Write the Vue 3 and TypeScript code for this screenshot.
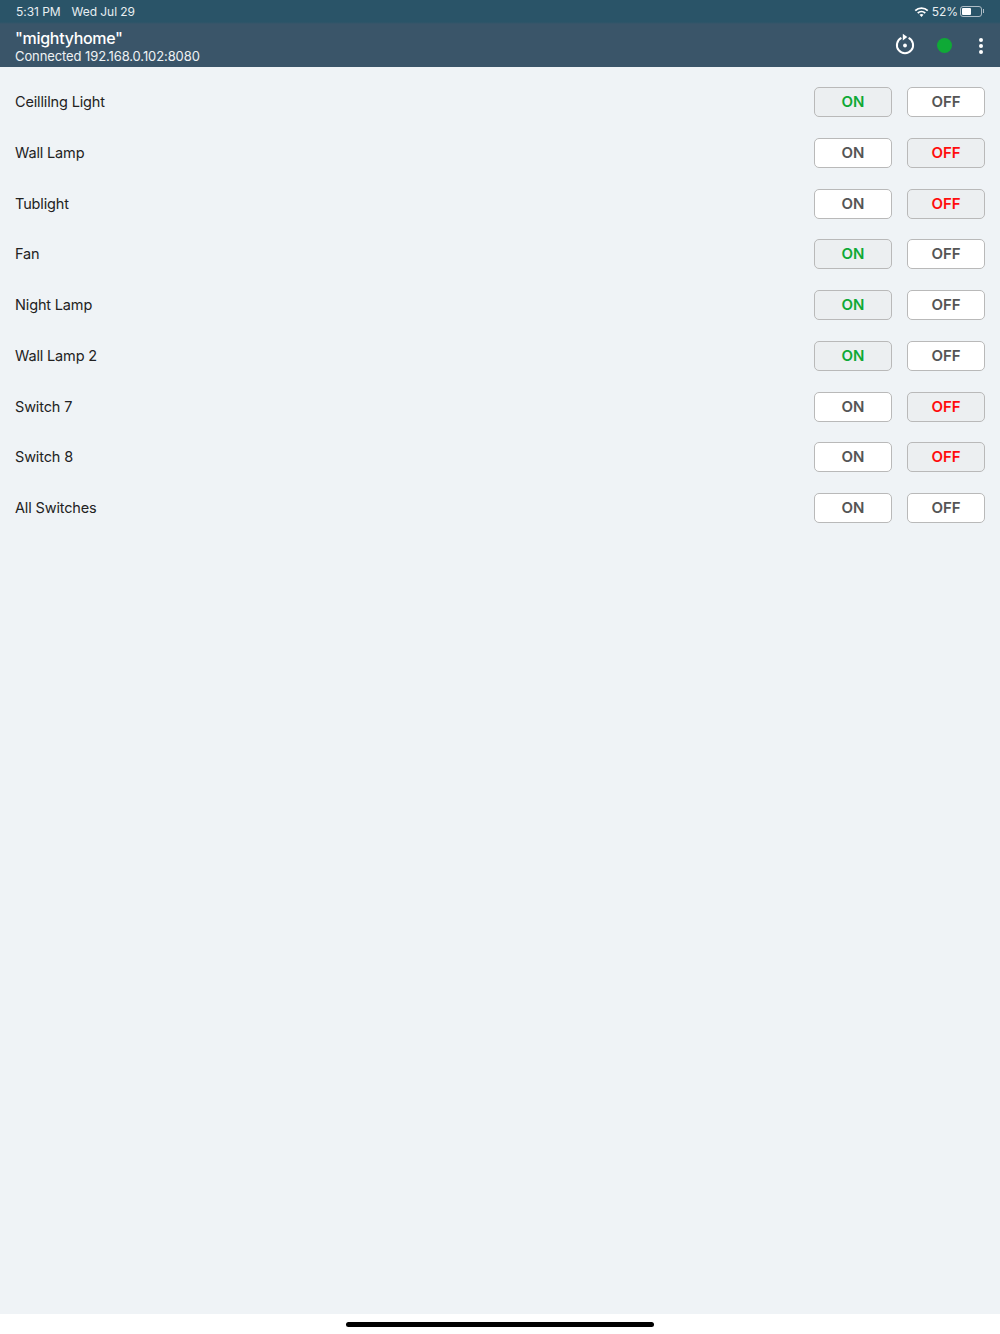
<template>
  <div class="page">
    <header class="head">
      <div class="status">
        <div class="clock"><span>5:31 PM</span><span>Wed Jul 29</span></div>
        <div class="sys">
          <svg class="wifi" width="15" height="11" viewBox="0 0 15 11">
            <path d="M0.6 3.9A10 10 0 0 1 14.4 3.9L13.1 5.3A8.1 8.1 0 0 0 1.9 5.3Z" fill="#fff" />
            <path d="M3.1 6.4A6.4 6.4 0 0 1 11.9 6.4L10.6 7.7A4.6 4.6 0 0 0 4.4 7.7Z" fill="#fff" />
            <path d="M5.5 8.8A3 3 0 0 1 9.5 8.8L7.5 10.9Z" fill="#fff" />
          </svg>
          <span class="pct">52%</span>
          <div class="battery"><div class="level" :style="{ width: '52%' }"></div></div>
          <div class="nub"></div>
        </div>
      </div>
      <div class="bar">
        <div class="titles">
          <div class="name">"mightyhome"</div>
          <div class="addr">Connected 192.168.0.102:8080</div>
        </div>
        <div class="actions">
          <svg class="reload" width="20" height="22" viewBox="0 0 20 22" fill="none">
            <path d="M6.4 4.9A8.1 8.1 0 1 0 13.6 4.9" stroke="#fff" stroke-width="2" />
            <path d="M7.8 0.8L12.3 4.1L7.8 7.6Z" fill="#fff" />
            <circle cx="10" cy="12.5" r="1.9" fill="#fff" />
          </svg>
          <div class="dot"></div>
          <div class="menu"><i></i><i></i><i></i></div>
        </div>
      </div>
    </header>

    <main class="list">
      <div v-for="sw in switches" :key="sw.name" class="row">
        <span class="label">{{ sw.name }}</span>
        <div class="btns">
          <button class="btn" :class="{ active: sw.state === 'on', on: sw.state === 'on' }">ON</button>
          <button class="btn" :class="{ active: sw.state === 'off', off: sw.state === 'off' }">OFF</button>
        </div>
      </div>
    </main>

    <footer class="foot"><div class="home"></div></footer>
  </div>
</template>

<script setup lang="ts">
type SwitchState = 'on' | 'off' | 'none'

const switches: { name: string; state: SwitchState }[] = [
  { name: 'Ceillilng Light', state: 'on' },
  { name: 'Wall Lamp', state: 'off' },
  { name: 'Tublight', state: 'off' },
  { name: 'Fan', state: 'on' },
  { name: 'Night Lamp', state: 'on' },
  { name: 'Wall Lamp 2', state: 'on' },
  { name: 'Switch 7', state: 'off' },
  { name: 'Switch 8', state: 'off' },
  { name: 'All Switches', state: 'none' },
]
</script>

<style>
body {
  background: #fff;
}
</style>

<style scoped>
.page {
  width: 1000px;
  height: 1334px;
  display: flex;
  flex-direction: column;
  font-family: Inter, "Liberation Sans", sans-serif;
  overflow: hidden;
}

.head {
  height: 67px;
  flex: none;
  box-sizing: border-box;
  background: linear-gradient(#2a5468 0, #2a5468 22px, #3a5569 24px, #3a5569 100%);
  color: #fff;
}

.status {
  height: 22px;
  display: flex;
  justify-content: space-between;
  align-items: center;
  padding: 0 16px;
  font-size: 12px;
  letter-spacing: -0.05px;
  color: #e8eef1;
}

.clock {
  display: flex;
  gap: 11px;
}

.sys {
  display: flex;
  align-items: center;
}

.wifi {
  margin-right: 3px;
}

.pct {
  margin-right: 2px;
}

.battery {
  width: 22px;
  height: 11px;
  box-sizing: border-box;
  border: 1px solid #aebcc5;
  border-radius: 3px;
  padding: 1px;
}

.level {
  height: 100%;
  background: #fff;
  border-radius: 1px;
}

.nub {
  width: 1px;
  height: 4px;
  background: #aebcc5;
  margin-left: 1px;
}

.bar {
  height: 45px;
  display: flex;
  justify-content: space-between;
  padding: 6px 17px 0 15px;
  box-sizing: border-box;
}

.name {
  font-size: 16px;
  line-height: 20px;
  font-weight: 500;
  letter-spacing: -0.3px;
}

.addr {
  font-size: 13px;
  line-height: 16px;
  letter-spacing: -0.1px;
  color: #eef2f4;
}

.actions {
  display: flex;
  align-items: center;
  padding-bottom: 4px;
}

.reload {
  margin-right: 22px;
  margin-bottom: 3px;
}

.dot {
  width: 15px;
  height: 15px;
  border-radius: 50%;
  background: #0fa936;
  margin-right: 27px;
}

.menu {
  width: 4px;
  display: flex;
  flex-direction: column;
  gap: 2px;
}

.menu i {
  width: 4px;
  height: 4px;
  border-radius: 50%;
  background: #fff;
}

.list {
  flex: 1;
  background: #eff3f6;
  padding: 9.7px 15px 0;
}

.row {
  height: 50.75px;
  display: flex;
  justify-content: space-between;
  align-items: center;
}

.label {
  font-size: 14.5px;
  letter-spacing: -0.15px;
  color: #222;
  margin-bottom: 1px;
}

.btns {
  display: flex;
  gap: 15px;
}

.btn {
  width: 78px;
  height: 30px;
  box-sizing: border-box;
  border: 1.5px solid #b9b9b9;
  border-radius: 5px;
  background: #fff;
  color: #555;
  font-family: inherit;
  font-size: 15px;
  font-weight: 600;
  padding: 0 0 1px;
}

.btn.active {
  background: #eceff1;
}

.btn.on {
  color: #0fa936;
}

.btn.off {
  color: #ff0d0d;
}

.foot {
  height: 20px;
  flex: none;
  background: #fff;
  display: flex;
  justify-content: center;
  padding-top: 8px;
  box-sizing: border-box;
}

.home {
  width: 308px;
  height: 5px;
  border-radius: 3px;
  background: #000;
}
</style>
